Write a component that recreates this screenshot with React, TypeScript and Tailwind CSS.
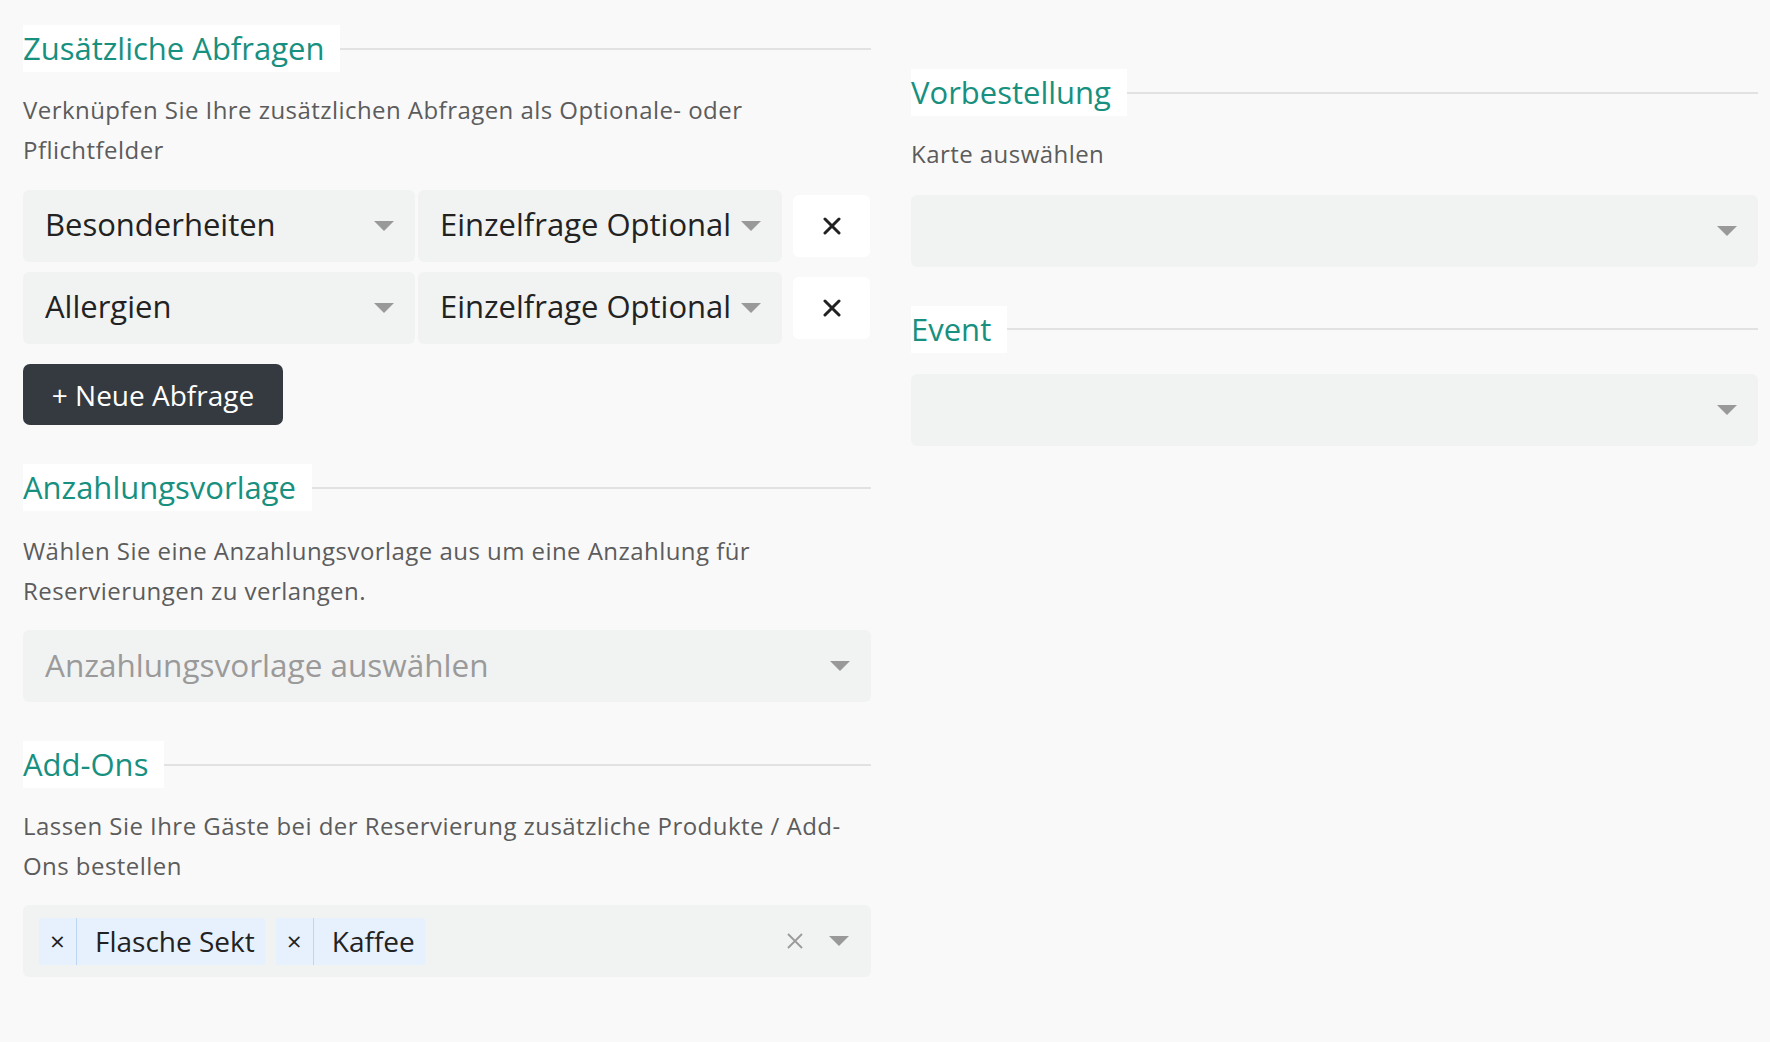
import { ReactNode } from 'react'

const FONT = { fontFamily: '"Open Sans", "Lato", sans-serif' }

function Caret() {
  return (
    <svg width="20" height="10" viewBox="0 0 20 10" className="shrink-0">
      <polygon points="0,0 20,0 10,10" fill="#999999" />
    </svg>
  )
}

function SectionHeading({ title }: { title: string }) {
  return (
    <div className="flex items-center">
      <h3 className="bg-white h-[47px] pr-[16px] flex items-center text-[31px] leading-none text-[#17907f]">
        {title}
      </h3>
      <div className="flex-1 h-[2px] bg-[#e2e2e2]" />
    </div>
  )
}

function Description({ children }: { children: ReactNode }) {
  return <p className="text-[24px] leading-[39.5px] tracking-[0.45px] text-[#5c5c5c]">{children}</p>
}

function Select({ value, placeholder, className = '' }: { value?: string; placeholder?: string; className?: string }) {
  return (
    <div className={`h-[72px] bg-[#f1f2f2] rounded-[6px] flex items-center justify-between pl-[22px] pr-[21px] ${className}`}>
      {value ? (
        <span className="text-[31px] text-[#222222] truncate -mt-[3px]">{value}</span>
      ) : (
        <span className="text-[31.5px] text-[#9a9a9a] truncate -mt-[3px]">{placeholder}</span>
      )}
      <Caret />
    </div>
  )
}

function QueryRow({ field }: { field: string }) {
  return (
    <div className="flex items-center">
      <Select value={field} className="w-[392px]" />
      <Select value="Einzelfrage Optional" className="w-[364px] ml-[3px] pl-[22px] pr-[20px]" />
      <button className="ml-[11px] w-[77px] h-[62px] bg-white rounded-[6px] flex items-center justify-center">
        <svg width="18" height="18" viewBox="0 0 18 18">
          <path d="M2 2 L16 16 M16 2 L2 16" stroke="#222222" strokeWidth="3" strokeLinecap="round" />
        </svg>
      </button>
    </div>
  )
}

function Tag({ label }: { label: string }) {
  return (
    <div className="h-[47px] flex items-stretch bg-[#e7f1fd] rounded-[2px]">
      <span className="w-[38px] flex items-center justify-center border-r border-[#bcd7f3] text-[26px] text-[#222222] leading-none">
        ×
      </span>
      <span className="pl-[18px] pr-[10px] flex items-center text-[28px] text-[#222222]">{label}</span>
    </div>
  )
}

export default function App() {
  return (
    <div className="min-h-screen bg-[#f9f9f9]" style={FONT}>
      <div className="flex gap-[40px] pl-[23px] pr-[12px] pt-[25px]">
        {/* Left column */}
        <div className="w-[848px] shrink-0 flex flex-col">
          <SectionHeading title="Zusätzliche Abfragen" />
          <div className="mt-[18px]">
            <Description>Verknüpfen Sie Ihre zusätzlichen Abfragen als Optionale- oder Pflichtfelder</Description>
          </div>
          <div className="mt-[21px] flex flex-col gap-[10px]">
            <QueryRow field="Besonderheiten" />
            <QueryRow field="Allergien" />
          </div>
          <div className="mt-[20px]">
            <button className="h-[61px] w-[260px] bg-[#343a40] rounded-[7px] text-white text-[28px]">+ Neue Abfrage</button>
          </div>

          <div className="mt-[39px]">
            <SectionHeading title="Anzahlungsvorlage" />
          </div>
          <div className="mt-[20px]">
            <Description>Wählen Sie eine Anzahlungsvorlage aus um eine Anzahlung für Reservierungen zu verlangen.</Description>
          </div>
          <div className="mt-[20px]">
            <Select placeholder="Anzahlungsvorlage auswählen" />
          </div>

          <div className="mt-[39px]">
            <SectionHeading title="Add-Ons" />
          </div>
          <div className="mt-[18px]">
            <Description>Lassen Sie Ihre Gäste bei der Reservierung zusätzliche Produkte / Add-Ons bestellen</Description>
          </div>
          <div className="mt-[20px] h-[72px] bg-[#f1f2f2] rounded-[6px] flex items-center pl-[16px] pr-[22px]">
            <div className="flex-1 flex items-center gap-[11px]">
              <Tag label="Flasche Sekt" />
              <Tag label="Kaffee" />
            </div>
            <svg width="18" height="18" viewBox="0 0 18 18" className="mr-[25px]">
              <path d="M2 2 L16 16 M16 2 L2 16" stroke="#9a9a9a" strokeWidth="1.8" />
            </svg>
            <Caret />
          </div>
        </div>

        {/* Right column */}
        <div className="flex-1 flex flex-col pt-[44px]">
          <SectionHeading title="Vorbestellung" />
          <div className="mt-[18px]">
            <Description>Karte auswählen</Description>
          </div>
          <div className="mt-[21px]">
            <Select value="" placeholder="" />
          </div>
          <div className="mt-[39px]">
            <SectionHeading title="Event" />
          </div>
          <div className="mt-[21px]">
            <Select value="" placeholder="" />
          </div>
        </div>
      </div>
    </div>
  )
}
